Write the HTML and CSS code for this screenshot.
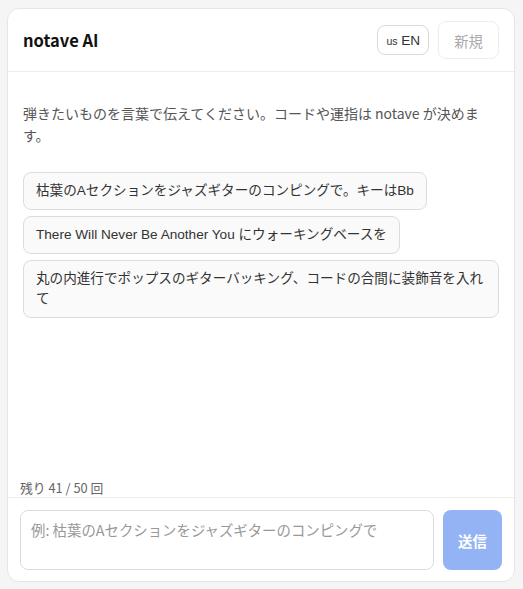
FILE: index.html
```html
<!DOCTYPE html>
<html lang="ja">
<head>
<meta charset="utf-8">
<title>notave AI</title>
<link rel="stylesheet" href="styles.css">
</head>
<body>
  <main class="chat">
    <header class="chat-header">
      <h1 class="brand">notave AI</h1>
      <div class="header-actions">
        <button class="lang-btn" type="button"><span class="flag">us</span> EN</button>
        <button class="new-btn" type="button" disabled>新規</button>
      </div>
    </header>

    <section class="messages">
      <p class="intro">弾きたいものを言葉で伝えてください。コードや運指は notave が決めます。</p>
      <div class="suggestions">
        <button class="chip" type="button">枯葉のAセクションをジャズギターのコンピングで。キーはBb</button>
        <button class="chip" type="button">There Will Never Be Another You にウォーキングベースを</button>
        <button class="chip" type="button">丸の内進行でポップスのギターバッキング、コードの合間に装飾音を入れて</button>
      </div>
    </section>

    <div class="quota">残り 41 / 50 回</div>

    <form class="composer">
      <textarea class="prompt" placeholder="例: 枯葉のAセクションをジャズギターのコンピングで"></textarea>
      <button class="send-btn" type="button" disabled>送信</button>
    </form>
  </main>
</body>
</html>
```

FILE: styles.css
```css
* {
  box-sizing: border-box;
}

html, body {
  margin: 0;
  height: 100%;
}

body {
  background: #f5f5f5;
  padding: 8px 8px 7px 7px;
  font-family: "Noto Sans CJK JP", "Noto Sans", sans-serif;
  color: #222;
}

.chat {
  height: 574px;
  background: #fff;
  border: 1px solid #e5e5e5;
  border-radius: 12px;
  display: flex;
  flex-direction: column;
  overflow: hidden;
}

.chat-header {
  display: flex;
  align-items: center;
  justify-content: space-between;
  padding: 12px 15px;
  border-bottom: 1px solid #ececec;
}

.brand {
  margin: 0;
  font-size: 16.5px;
  font-weight: 700;
  color: #111;
}

.header-actions {
  display: flex;
  align-items: center;
  gap: 9px;
}

.lang-btn {
  height: 30px;
  padding: 0 8px;
  background: #fff;
  border: 1px solid #d9d9d9;
  border-radius: 8px;
  font-family: "Liberation Sans", "Noto Sans CJK JP", sans-serif;
  font-size: 13.6px;
  color: #333;
}

.flag {
  font-size: 10.5px;
}

.new-btn {
  height: 38px;
  padding: 0 15px;
  background: #fff;
  border: 1px solid #ececec;
  border-radius: 8px;
  font-family: "Noto Sans CJK JP", sans-serif;
  font-size: 14.4px;
  color: #aaa;
}

.messages {
  flex: 1;
  padding: 20px 15px 0;
}

.intro {
  margin: 10px 0 0;
  font-size: 14px;
  line-height: 22px;
  color: #555;
}

.suggestions {
  margin-top: 26px;
  display: flex;
  flex-direction: column;
  align-items: flex-start;
  gap: 6px;
}

.chip {
  padding: 8px 12px;
  background: #fafafa;
  border: 1px solid #dcdcdc;
  border-radius: 8px;
  font-family: "Liberation Sans", "Noto Sans CJK JP", sans-serif;
  font-size: 13.6px;
  line-height: 20px;
  color: #333;
  text-align: left;
}

.quota {
  padding: 0 12px 1px;
  font-size: 12.8px;
  line-height: 17px;
  color: #666;
}

.composer {
  display: flex;
  gap: 9px;
  padding: 12px 12px 11px;
  border-top: 1px solid #ececec;
}

.prompt {
  flex: 1;
  height: 60px;
  padding: 8px 10px;
  border: 1px solid #dcdcdc;
  border-radius: 8px;
  font-family: inherit;
  font-size: 14.4px;
  line-height: 21px;
  resize: none;
  color: #222;
}

.prompt::placeholder {
  color: #999;
}

.send-btn {
  width: 59px;
  height: 60px;
  background: #93b3f5;
  border: none;
  border-radius: 8px;
  font-family: "Noto Sans CJK JP", sans-serif;
  font-size: 14.4px;
  font-weight: 700;
  color: #fff;
}
```
